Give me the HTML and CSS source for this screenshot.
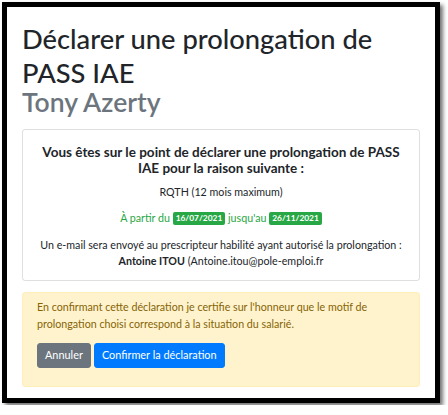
FILE: index.html
```html
<!DOCTYPE html>
<html lang="fr">
<head>
<meta charset="utf-8">
<link rel="stylesheet" href="styles.css">
</head>
<body>
<div class="frame">
  <div class="content">
    <h1 class="title">Déclarer une prolongation de PASS IAE</h1>
    <h2 class="subtitle">Tony Azerty</h2>
    <div class="card">
      <h5 class="card-title">Vous êtes sur le point de déclarer une prolongation de PASS IAE pour la raison suivante :</h5>
      <p class="reason">RQTH (12 mois maximum)</p>
      <p class="dates">À partir du <span class="badge">16/07/2021</span> jusqu'au <span class="badge">26/11/2021</span></p>
      <p class="mail"><span class="nowrap">Un e-mail sera envoyé au prescripteur habilité ayant autorisé la prolongation :</span><br><strong>Antoine ITOU</strong> (Antoine.itou@pole-emploi.fr</p>
    </div>
    <div class="alert">
      <p class="alert-text">En confirmant cette déclaration je certifie sur l'honneur que le motif de prolongation choisi correspond à la situation du salarié.</p>
      <div class="actions">
        <button class="btn btn-secondary">Annuler</button>
        <button class="btn btn-primary">Confirmer la déclaration</button>
      </div>
    </div>
  </div>
</div>
</body>
</html>
```
FILE: styles.css
```css
* { box-sizing: border-box; }
html, body { margin: 0; padding: 0; background: #fff; }
body {
  font-family: "Lato", "Open Sans", sans-serif;
  font-size: 10.7px;
  line-height: 16.8px;
  color: #212529;
}
.frame {
  margin: 2px;
  width: 438px;
  height: 401px;
  border: 5px solid #000;
  box-shadow: 3px 3px 4px rgba(0,0,0,0.55);
  background: #fff;
}
.content {
  padding: 15px 15px 0 15px;
}
.title {
  margin: 0;
  font-size: 27.3px;
  font-weight: 500;
  line-height: 34px;
  color: #212529;
}
.subtitle {
  margin: -3px 0 0 0;
  font-size: 26.5px;
  font-weight: 600;
  line-height: 30px;
  color: #6c757d;
}
.card {
  margin-top: 12px;
  border: 1px solid rgba(0,0,0,0.125);
  border-radius: 3px;
  padding: 14px 12px 10px;
  text-align: center;
}
.card-title {
  margin: 0 0 8px;
  font-size: 13.5px;
  font-weight: 700;
  line-height: 16px;
}
.card p { margin: 0 0 9.5px; }
.card p.mail { margin: 0; }
.nowrap { white-space: nowrap; }
.reason { color: #212529; }
.dates { color: #28a745; }
.badge {
  display: inline-block;
  background: #28a745;
  color: #fff;
  font-size: 8.4px;
  font-weight: 700;
  line-height: 1;
  padding: 2px 3px;
  border-radius: 2px;
  vertical-align: 1px;
}
.mail strong { font-weight: 700; }
.alert {
  margin-top: 11px;
  background: #fff3cd;
  border: 1px solid #ffeeba;
  border-radius: 3px;
  padding: 6px 14px 18px;
  color: #856404;
}
.alert-text { margin: 0 0 10px; }
.actions { display: flex; gap: 3px; }
.btn {
  font-family: inherit;
  font-size: 10.9px;
  line-height: 16.8px;
  padding: 3px 7px;
  border: 1px solid transparent;
  border-radius: 3px;
  color: #fff;
}
.btn-secondary { background: #6c757d; border-color: #6c757d; }
.btn-primary { background: #007bff; border-color: #007bff; }
```
